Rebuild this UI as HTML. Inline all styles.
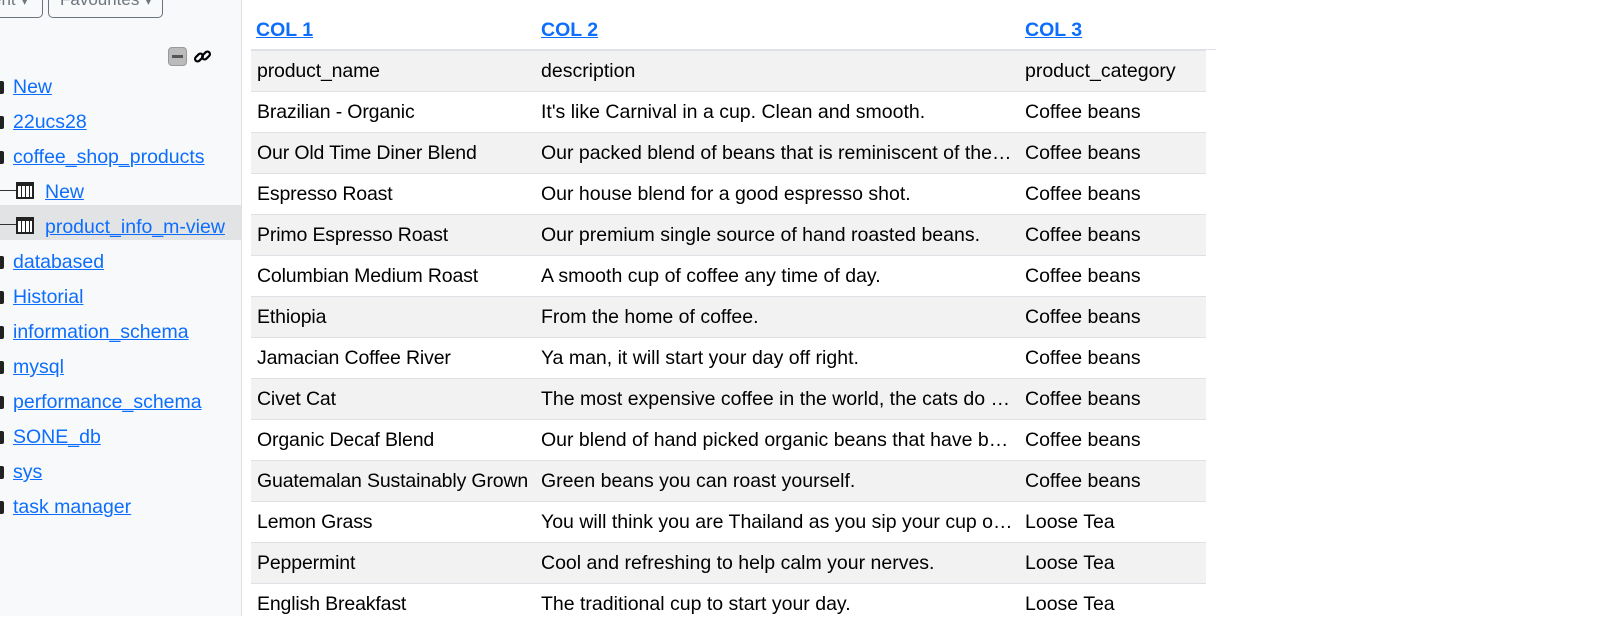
<!DOCTYPE html>
<html><head><meta charset="utf-8"><style>
*{margin:0;padding:0;box-sizing:border-box}
body{width:1622px;height:616px;overflow:hidden;background:#fff;font-family:"Liberation Sans",sans-serif;position:relative;color:#212529}
#side{position:absolute;left:0;top:0;width:242px;height:616px;background:#f8f9fa;border-right:1px solid #dee2e6}
.btn{position:absolute;top:-12px;height:30px;border:1px solid #6c757d;border-radius:5px;font-size:17px;color:#6c757d;padding:0 11px;line-height:22px;white-space:nowrap}
.it{position:absolute;left:13px;font-size:19.5px;line-height:24px;color:#0d6efd;text-decoration:underline;white-space:nowrap}
.ic{position:absolute;left:-4px;width:8px;height:13px;background:#222;border-radius:2px}
#hl{position:absolute;left:0;top:205px;width:241px;height:35px;background:#e2e3e5}
.tb{position:absolute;left:16px;width:18px;height:17px;border:2px solid #222;border-top-width:4px;background:repeating-linear-gradient(90deg,#fff 0 3px,#222 3px 4px)}
table{position:absolute;left:251px;top:50px;border-collapse:collapse;width:955px;table-layout:fixed;font-size:19.5px}
td{height:41px;padding:0 6px;white-space:nowrap;overflow:hidden;text-overflow:ellipsis;border-top:1px solid #dee2e6;color:#000}
td:first-child{overflow:visible;text-overflow:clip;padding-right:0;letter-spacing:-0.15px}
tr:nth-child(odd) td{background:#f2f2f2}
.h{position:absolute;top:19px;font-size:19.5px;font-weight:bold;color:#0d6efd;text-decoration:underline}
</style></head><body>
<div id="side">
<div class="btn" style="left:-20px;width:63px">ent ▾</div>
<div class="btn" style="left:48px;width:115px">Favourites ▾</div>
<div style="position:absolute;left:168px;top:47px;width:19px;height:19px;background:#bbb;border-radius:4px;border:1px solid #999"><div style="position:absolute;left:3px;top:7px;width:11px;height:3px;background:#555"></div></div>
<svg style="position:absolute;left:193px;top:47px" width="19" height="19" viewBox="0 0 19 19" fill="none" stroke="#000" stroke-width="2.2"><rect x="1.5" y="8" width="9" height="5" rx="2.5" transform="rotate(-45 6 10.5)"/><rect x="8.5" y="6" width="9" height="5" rx="2.5" transform="rotate(-45 13 8.5)"/></svg>
<div id="hl"></div>
<div class="ic" style="top:81px"></div><div class="it" style="top:75px">New</div>
<div class="ic" style="top:116px"></div><div class="it" style="top:110px">22ucs28</div>
<div class="ic" style="top:151px"></div><div class="it" style="top:145px">coffee_shop_products</div>
<div style="position:absolute;left:0;top:190px;width:16px;height:1px;background:#333"></div>
<div class="tb" style="top:182px"></div>
<div class="it" style="left:45px;top:180px">New</div>
<div style="position:absolute;left:0;top:224px;width:16px;height:1px;background:#333"></div>
<div class="tb" style="top:217px"></div>
<div class="it" style="left:45px;top:215px">product_info_m-view</div>
<div class="ic" style="top:256px"></div><div class="it" style="top:250px">databased</div>
<div class="ic" style="top:291px"></div><div class="it" style="top:285px">Historial</div>
<div class="ic" style="top:326px"></div><div class="it" style="top:320px">information_schema</div>
<div class="ic" style="top:361px"></div><div class="it" style="top:355px">mysql</div>
<div class="ic" style="top:396px"></div><div class="it" style="top:390px">performance_schema</div>
<div class="ic" style="top:431px"></div><div class="it" style="top:425px">SONE_db</div>
<div class="ic" style="top:466px"></div><div class="it" style="top:460px">sys</div>
<div class="ic" style="top:501px"></div><div class="it" style="top:495px">task manager</div>
</div>
<div class="h" style="left:256px">COL 1</div>
<div class="h" style="left:541px">COL 2</div>
<div class="h" style="left:1025px">COL 3</div>
<div style="position:absolute;left:251px;top:49px;width:965px;height:1px;background:#dee2e6"></div>
<table>
<colgroup><col style="width:284px"><col style="width:484px"><col style="width:187px"></colgroup>
<tr><td>product_name</td><td>description</td><td>product_category</td></tr>
<tr><td>Brazilian - Organic</td><td>It's like Carnival in a cup. Clean and smooth.</td><td>Coffee beans</td></tr>
<tr><td>Our Old Time Diner Blend</td><td>Our packed blend of beans that is reminiscent of the diner</td><td>Coffee beans</td></tr>
<tr><td>Espresso Roast</td><td>Our house blend for a good espresso shot.</td><td>Coffee beans</td></tr>
<tr><td>Primo Espresso Roast</td><td>Our premium single source of hand roasted beans.</td><td>Coffee beans</td></tr>
<tr><td>Columbian Medium Roast</td><td>A smooth cup of coffee any time of day.</td><td>Coffee beans</td></tr>
<tr><td>Ethiopia</td><td>From the home of coffee.</td><td>Coffee beans</td></tr>
<tr><td>Jamacian Coffee River</td><td>Ya man, it will start your day off right.</td><td>Coffee beans</td></tr>
<tr><td>Civet Cat</td><td>The most expensive coffee in the world, the cats do all the work</td><td>Coffee beans</td></tr>
<tr><td>Organic Decaf Blend</td><td>Our blend of hand picked organic beans that have been decaf</td><td>Coffee beans</td></tr>
<tr><td>Guatemalan Sustainably Grown</td><td>Green beans you can roast yourself.</td><td>Coffee beans</td></tr>
<tr><td>Lemon Grass</td><td>You will think you are Thailand as you sip your cup of tea</td><td>Loose Tea</td></tr>
<tr><td>Peppermint</td><td>Cool and refreshing to help calm your nerves.</td><td>Loose Tea</td></tr>
<tr><td>English Breakfast</td><td>The traditional cup to start your day.</td><td>Loose Tea</td></tr>
</table>
</body></html>
